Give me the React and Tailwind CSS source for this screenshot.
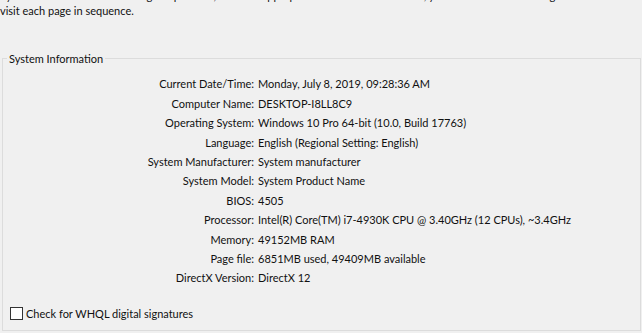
const rows = [
  ['Current Date/Time:', 'Monday, July 8, 2019, 09:28:36 AM'],
  ['Computer Name:', 'DESKTOP-I8LL8C9'],
  ['Operating System:', 'Windows 10 Pro 64-bit (10.0, Build 17763)'],
  ['Language:', 'English (Regional Setting: English)'],
  ['System Manufacturer:', 'System manufacturer'],
  ['System Model:', 'System Product Name'],
  ['BIOS:', '4505'],
  ['Processor:', 'Intel(R) Core(TM) i7-4930K CPU @ 3.40GHz (12 CPUs), ~3.4GHz'],
  ['Memory:', '49152MB RAM'],
  ['Page file:', '6851MB used, 49409MB available'],
  ['DirectX Version:', 'DirectX 12'],
];

export default function App() {
  return (
    <div className="relative w-[642px] h-[333px] overflow-hidden bg-[#f0f0f0] text-[11px] text-[#111] font-['Lato',sans-serif]">
      {/* intro text, scrolled so the first line is cut off */}
      <div className="mt-[-12px] ml-[-3px] leading-[15px] whitespace-nowrap">
        <div>If you know what area is causing the problem, click the appropriate tab above. Otherwise, you can use the "Next Page" button below to</div>
        <div className="ml-[3px]">visit each page in sequence.</div>
      </div>

      {/* group box */}
      <div className="relative mt-[40px] ml-[2px] mr-[1px] h-[273px] border border-[#dcdcdc]">
        <span className="absolute left-[4px] top-[-8px] px-[2px] bg-[#f0f0f0] leading-[16px]">System Information</span>

        <div className="pt-[16px]">
          {rows.map(([label, value]) => (
            <div key={label} className="flex h-[19.4px] items-center whitespace-nowrap">
              <div className="w-[251px] text-right">{label}</div>
              <div className="pl-[4px]">{value}</div>
            </div>
          ))}
        </div>
      </div>

      <div className="absolute left-[10px] top-[307px] flex items-center gap-[3px]">
        <div className="w-[13px] h-[13px] border border-[#333333] bg-white" />
        <span className="leading-[13px]">Check for WHQL digital signatures</span>
      </div>
    </div>
  );
}
